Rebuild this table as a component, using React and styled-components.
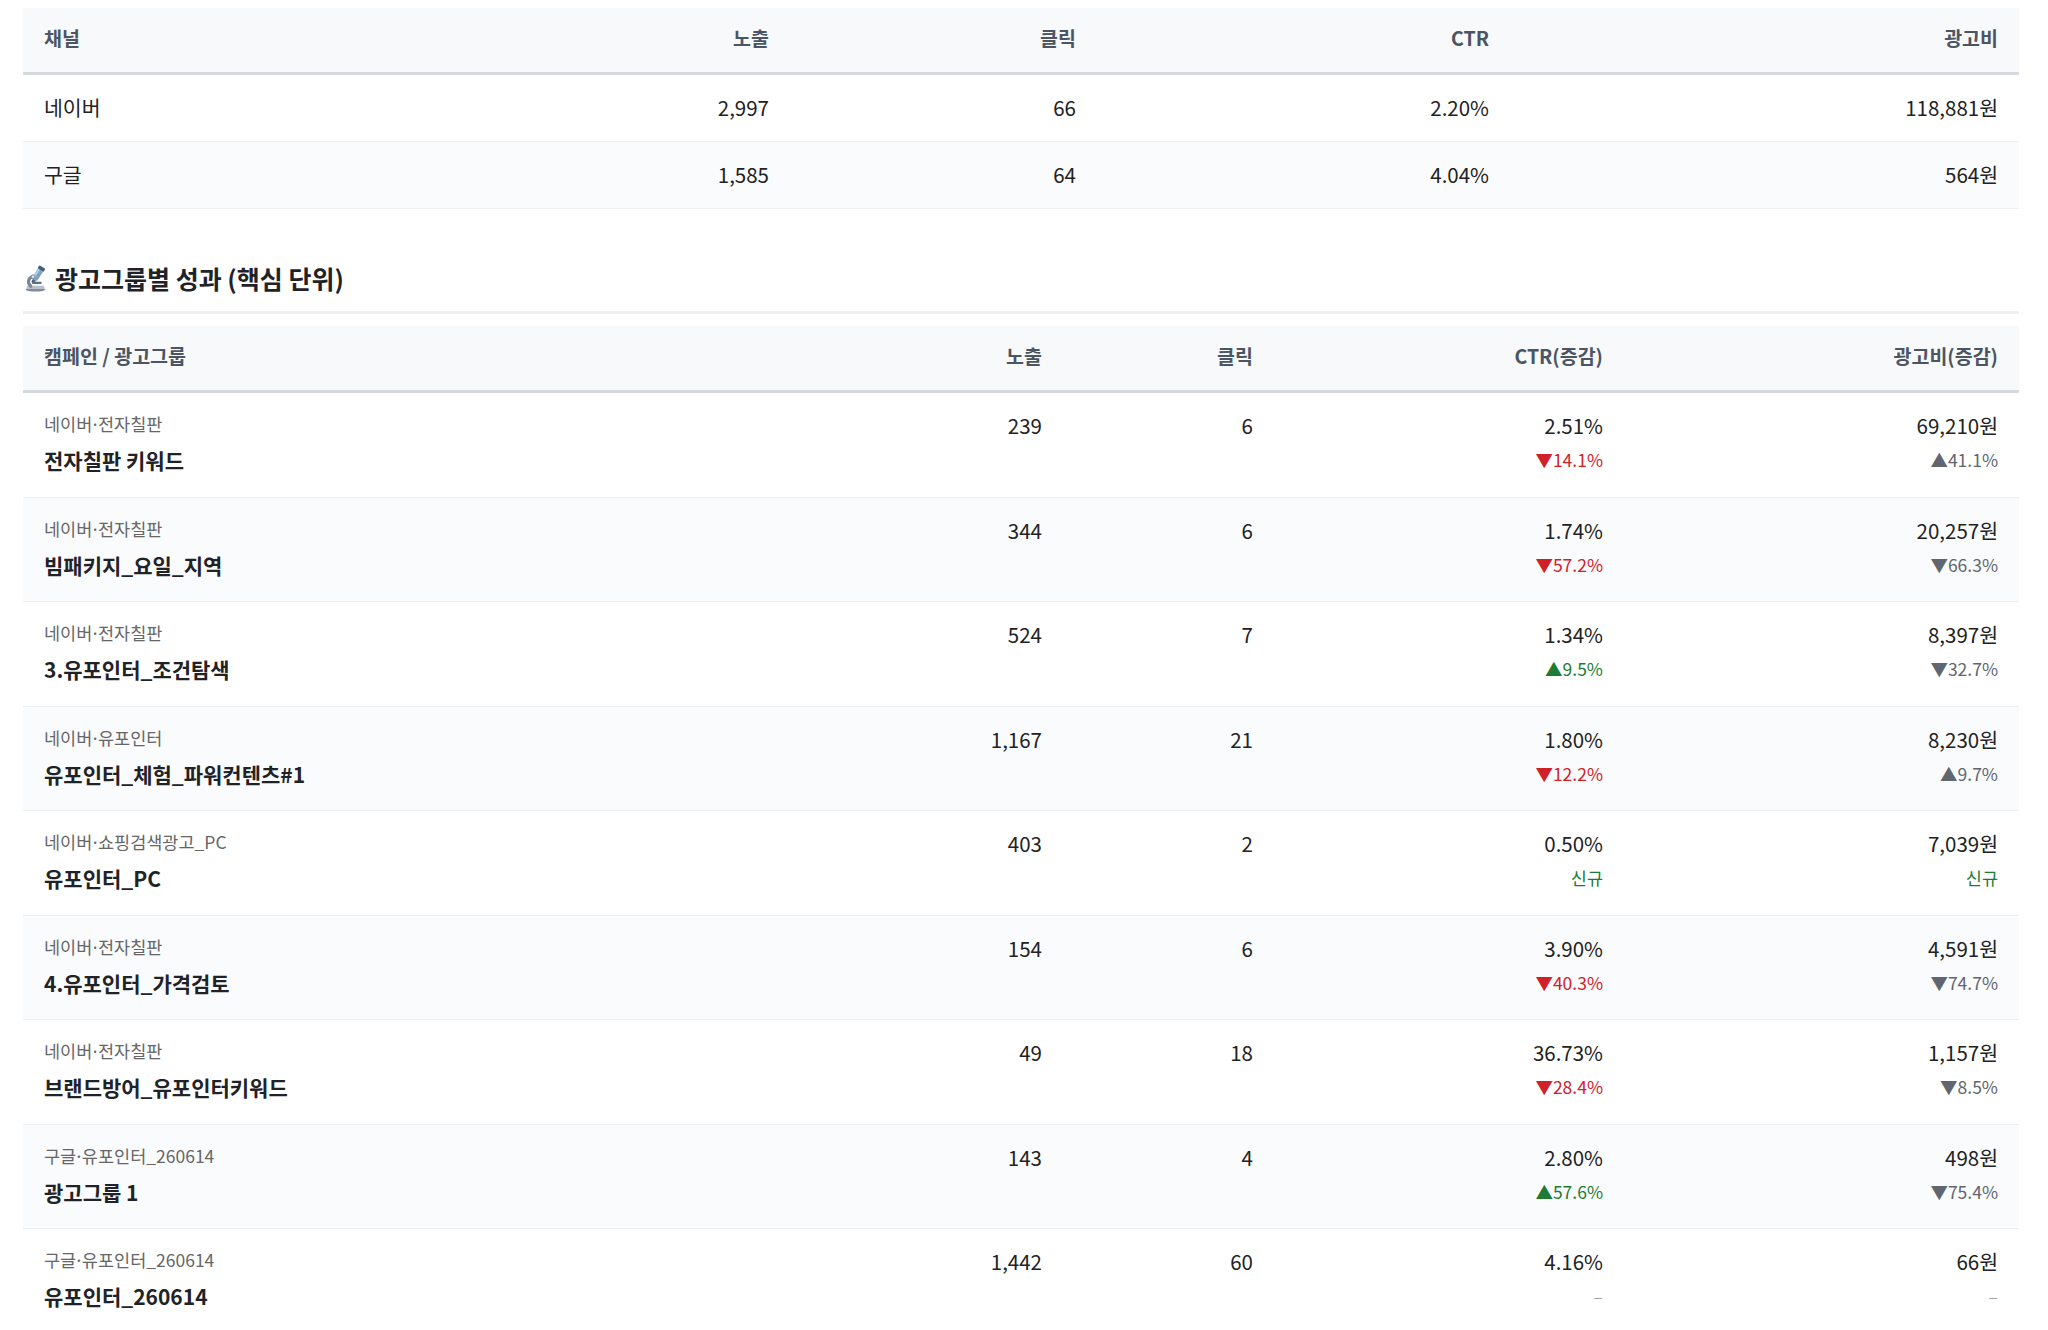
import React from 'react'
import styled, { createGlobalStyle } from 'styled-components'

const GlobalStyle = createGlobalStyle`
  body {
    margin: 0;
    background: #fff;
    font-family: "Noto Sans CJK KR", "Noto Sans", sans-serif;
    color: #222;
  }
`

const channelColumns = '420px 347px 307px 413px 509px'
const groupColumns = '840px 200px 211px 350px 395px'

const channels = [
  { name: '네이버', imp: '2,997', clicks: '66', ctr: '2.20%', cost: '118,881원' },
  { name: '구글', imp: '1,585', clicks: '64', ctr: '4.04%', cost: '564원' },
]

const groups = [
  { campaign: '네이버·전자칠판', name: '전자칠판 키워드', imp: '239', clicks: '6', ctr: '2.51%', ctrDelta: { dir: 'down', value: '14.1%' }, cost: '69,210원', costDelta: { dir: 'up', value: '41.1%' } },
  { campaign: '네이버·전자칠판', name: '빔패키지_요일_지역', imp: '344', clicks: '6', ctr: '1.74%', ctrDelta: { dir: 'down', value: '57.2%' }, cost: '20,257원', costDelta: { dir: 'down', value: '66.3%' } },
  { campaign: '네이버·전자칠판', name: '3.유포인터_조건탐색', imp: '524', clicks: '7', ctr: '1.34%', ctrDelta: { dir: 'up', value: '9.5%' }, cost: '8,397원', costDelta: { dir: 'down', value: '32.7%' } },
  { campaign: '네이버·유포인터', name: '유포인터_체험_파워컨텐츠#1', imp: '1,167', clicks: '21', ctr: '1.80%', ctrDelta: { dir: 'down', value: '12.2%' }, cost: '8,230원', costDelta: { dir: 'up', value: '9.7%' } },
  { campaign: '네이버·쇼핑검색광고_PC', name: '유포인터_PC', imp: '403', clicks: '2', ctr: '0.50%', ctrDelta: { dir: 'new' }, cost: '7,039원', costDelta: { dir: 'new' } },
  { campaign: '네이버·전자칠판', name: '4.유포인터_가격검토', imp: '154', clicks: '6', ctr: '3.90%', ctrDelta: { dir: 'down', value: '40.3%' }, cost: '4,591원', costDelta: { dir: 'down', value: '74.7%' } },
  { campaign: '네이버·전자칠판', name: '브랜드방어_유포인터키워드', imp: '49', clicks: '18', ctr: '36.73%', ctrDelta: { dir: 'down', value: '28.4%' }, cost: '1,157원', costDelta: { dir: 'down', value: '8.5%' } },
  { campaign: '구글·유포인터_260614', name: '광고그룹 1', imp: '143', clicks: '4', ctr: '2.80%', ctrDelta: { dir: 'up', value: '57.6%' }, cost: '498원', costDelta: { dir: 'down', value: '75.4%' } },
  { campaign: '구글·유포인터_260614', name: '유포인터_260614', imp: '1,442', clicks: '60', ctr: '4.16%', ctrDelta: { dir: 'none' }, cost: '66원', costDelta: { dir: 'none' } },
]

function Delta({ delta, neutral }) {
  if (delta.dir === 'new') return <DeltaText $tone="green">신규</DeltaText>
  if (delta.dir === 'none') return <DeltaText $tone="muted">–</DeltaText>
  const arrow = delta.dir === 'up' ? '▲' : '▼'
  const tone = neutral ? 'grey' : delta.dir === 'up' ? 'green' : 'red'
  return <DeltaText $tone={tone}><Arrow>{arrow}</Arrow>{delta.value}</DeltaText>
}

// split "네이버·전자칠판" so the middle dot can sit tight like the original
function CampaignLabel({ text }) {
  const [channel, ...rest] = text.split('·')
  return (
    <Campaign>
      {channel}<Dot>·</Dot>{rest.join('·')}
    </Campaign>
  )
}

function Microscope() {
  return (
    <svg width="25" height="27" viewBox="0 0 24 26">
      <ellipse cx="12" cy="23.6" rx="9.5" ry="2" fill="#7f8d9b" />
      <rect x="3.5" y="20" width="17" height="3.2" rx="1.2" fill="#b7c2cc" />
      <path d="M7.5 20.5 C4 17.5 4.6 12.4 9.5 11" stroke="#76879a" strokeWidth="3" fill="none" strokeLinecap="round" />
      <g transform="rotate(32 14 9)">
        <rect x="11.3" y="3" width="5.8" height="12" rx="1.4" fill="#7fa3c3" />
        <rect x="11.3" y="3" width="2.2" height="12" rx="1" fill="#b3cce1" />
        <rect x="10.8" y="0.5" width="6.8" height="3.4" rx="1" fill="#435f7b" />
        <rect x="12.5" y="15" width="3.4" height="3.2" rx="0.8" fill="#4d6883" />
      </g>
      <rect x="8.5" y="16.2" width="9.5" height="2.2" rx="1" fill="#5f7183" />
      <circle cx="9.6" cy="11.3" r="1.8" fill="#dfe5ea" stroke="#76879a" strokeWidth="0.9" />
    </svg>
  )
}

export default function App() {
  return (
    <>
      <GlobalStyle />
      <Page>
        <Table>
          <HeadRow $cols={channelColumns}>
            <HeadCell>채널</HeadCell>
            <HeadCell $right>노출</HeadCell>
            <HeadCell $right>클릭</HeadCell>
            <HeadCell $right>CTR</HeadCell>
            <HeadCell $right>광고비</HeadCell>
          </HeadRow>
          {channels.map((c, i) => (
            <ChannelRow key={c.name} $cols={channelColumns} $striped={i % 2 === 1}>
              <Cell>{c.name}</Cell>
              <Cell $right>{c.imp}</Cell>
              <Cell $right>{c.clicks}</Cell>
              <Cell $right>{c.ctr}</Cell>
              <Cell $right>{c.cost}</Cell>
            </ChannelRow>
          ))}
        </Table>

        <SectionTitle>
          <Microscope />
          광고그룹별 성과 (핵심 단위)
        </SectionTitle>

        <Table>
          <HeadRow $cols={groupColumns}>
            <HeadCell>캠페인 / 광고그룹</HeadCell>
            <HeadCell $right>노출</HeadCell>
            <HeadCell $right>클릭</HeadCell>
            <HeadCell $right>CTR(증감)</HeadCell>
            <HeadCell $right>광고비(증감)</HeadCell>
          </HeadRow>
          {groups.map((g, i) => (
            <GroupRow key={g.name} $cols={groupColumns} $striped={i % 2 === 1}>
              <GroupCell>
                <CampaignLabel text={g.campaign} />
                <GroupName>{g.name}</GroupName>
              </GroupCell>
              <GroupCell $right><Value>{g.imp}</Value></GroupCell>
              <GroupCell $right><Value>{g.clicks}</Value></GroupCell>
              <GroupCell $right>
                <Value>{g.ctr}</Value>
                <Delta delta={g.ctrDelta} />
              </GroupCell>
              <GroupCell $right>
                <Value>{g.cost}</Value>
                <Delta delta={g.costDelta} neutral />
              </GroupCell>
            </GroupRow>
          ))}
        </Table>
      </Page>
    </>
  )
}

const Page = styled.div`
  padding: 8px 0 40px 23px;
  width: 1996px;
`

const Table = styled.div`
  width: 100%;
`

const HeadRow = styled.div`
  display: grid;
  grid-template-columns: ${p => p.$cols};
  height: 67px;
  padding-bottom: 6px;
  box-sizing: border-box;
  align-items: center;
  background: #f8f9fa;
  border-bottom: 3px solid #d5d9de;
`

const HeadCell = styled.div`
  padding: 0 21px;
  font-size: 19.5px;
  font-weight: 600;
  color: #4b5563;
  text-align: ${p => (p.$right ? 'right' : 'left')};
`

const ChannelRow = styled.div`
  display: grid;
  grid-template-columns: ${p => p.$cols};
  height: 67px;
  padding-bottom: 2px;
  box-sizing: border-box;
  align-items: center;
  background: ${p => (p.$striped ? '#fafbfc' : '#fff')};
  border-bottom: 1px solid #eceef0;
`

const Cell = styled.div`
  padding: 0 21px;
  font-size: 20.5px;
  color: #222;
  text-align: ${p => (p.$right ? 'right' : 'left')};
`

const SectionTitle = styled.h3`
  display: flex;
  align-items: center;
  gap: 7px;
  margin: 51px 0 12px;
  padding: 0 0 15px;
  font-size: 25px;
  font-weight: 700;
  line-height: 36px;
  color: #1f2328;
  border-bottom: 3px solid #eeeff1;
`

const GroupRow = styled.div`
  display: grid;
  grid-template-columns: ${p => p.$cols};
  height: 104.5px;
  box-sizing: border-box;
  background: ${p => (p.$striped ? '#fafbfc' : '#fff')};
  border-bottom: 1px solid #eceef0;
`

const GroupCell = styled.div`
  padding: 19px 21px 0;
  display: flex;
  flex-direction: column;
  align-items: ${p => (p.$right ? 'flex-end' : 'flex-start')};
`

const Campaign = styled.div`
  font-size: 17.5px;
  line-height: 24px;
  color: #666;
`

const Dot = styled.span`
  margin: 0 -0.12em;
`

const GroupName = styled.div`
  margin-top: 8px;
  font-size: 21px;
  line-height: 32px;
  font-weight: 700;
  color: #1f2328;
`

const Value = styled.div`
  font-size: 20.5px;
  line-height: 26px;
  color: #222;
`

const toneColors = {
  red: '#d0212b',
  green: '#1e7b34',
  grey: '#5f6670',
  muted: '#a0a5ab',
}

const DeltaText = styled.div`
  margin-top: 10px;
  font-size: 17.5px;
  line-height: 24px;
  color: ${p => toneColors[p.$tone]};
`

const Arrow = styled.span`
  font-size: 17.5px;
`
